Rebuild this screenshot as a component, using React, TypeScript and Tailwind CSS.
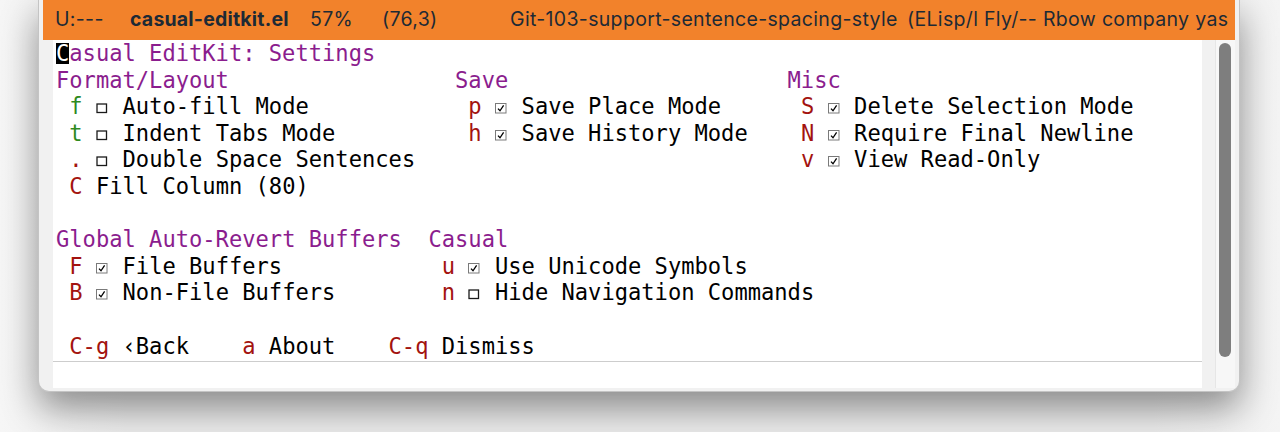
import React from "react";

const Key = ({ k, green }: { k: string; green?: boolean }) => (
    <span className={green ? "text-[#2f8a1f]" : "text-[#a3130f]"}>{k}</span>
);

const Box = ({ checked }: { checked?: boolean }) => (
    <span className="inline-block w-[1ch]">
        <svg width="12" height="11" viewBox="0 0 12 11" className="inline-block align-baseline">
            {checked ? (
                <>
                    <rect x="0.5" y="0.5" width="10.5" height="9.5" fill="white" stroke="#7a7a7a" />
                    <path d="M3 5.6 L5 7.8 L8.6 2.4" fill="none" stroke="#000" strokeWidth="1.3" />
                </>
            ) : (
                <rect x="1" y="1" width="9.5" height="8.5" fill="white" stroke="#1a1a1a" strokeWidth="1.3" />
            )}
        </svg>
    </span>
);

// one transient suffix: " k ☐ Label"
const Item = ({ k, label, checked, box = true, green }: { k: string; label: string; checked?: boolean; box?: boolean; green?: boolean }) => (
    <>
        {" "}<Key k={k} green={green} />{" "}
        {box && <><Box checked={checked} />{" "}</>}
        {label}
    </>
);

const Heading = ({ children }: { children: React.ReactNode }) => <span className="text-[#8b1d8e]">{children}</span>;

const Line = ({ children }: { children?: React.ReactNode }) => (
    <div className="h-[26.6px] leading-[26.6px] whitespace-pre">{children}</div>
);

const App = () => {
    return (
        <div className="w-[1280px] h-[432px] overflow-hidden bg-[linear-gradient(90deg,#f6f6f6,#ececec_10%,#ececec_90%,#f4f4f4)] pl-[38px] pr-[40px]">
            <div className="h-[392px] flex flex-col rounded-b-[11px] border border-t-0 border-[#c4c4c4] bg-[#f1f1f1] px-[4px] pb-[3px] shadow-[0_16px_36px_rgba(0,0,0,0.42)] overflow-hidden">

                {/* mode line */}
                <div className="h-[40px] shrink-0 bg-[#f2822b] flex items-center pl-[12px] text-[19.5px] text-[#1d2a35] font-['Inter',sans-serif] whitespace-pre tracking-[0.33px]">
                    <span className="w-[75px]">U:---</span>
                    <span className="w-[180px] font-bold tracking-[0.2px]">casual-editkit.el</span>
                    <span className="w-[72px]">57%</span>
                    <span className="w-[128px]">(76,3)</span>
                    <span className="w-[397px]">Git-103-support-sentence-spacing-style</span>
                    <span>(ELisp/l Fly/-- Rbow company yas</span>
                </div>

                <div className="flex flex-1 min-h-0">
                    {/* left fringe */}
                    <div className="w-[10px] shrink-0"></div>

                    {/* buffer + echo area */}
                    <div className="flex-1 flex flex-col bg-white">
                        <div className="h-[321px] pl-[3px] text-[22.1px] text-black font-['DejaVu_Sans_Mono',monospace]">
                            <Line>
                                {/* cursor on the first char */}
                                <span className="inline-block w-[1ch] text-white bg-[linear-gradient(transparent_3px,#000_3px,#000_24px,transparent_24px)]">C</span>
                                <Heading>asual EditKit: Settings</Heading>
                            </Line>
                            <Line>
                                <span className="inline-block w-[30ch]"><Heading>Format/Layout</Heading></span>
                                <span className="inline-block w-[25ch]"><Heading>Save</Heading></span>
                                <Heading>Misc</Heading>
                            </Line>
                            <Line>
                                <span className="inline-block w-[30ch]"><Item k="f" green label="Auto-fill Mode" /></span>
                                <span className="inline-block w-[25ch]"><Item k="p" checked label="Save Place Mode" /></span>
                                <Item k="S" checked label="Delete Selection Mode" />
                            </Line>
                            <Line>
                                <span className="inline-block w-[30ch]"><Item k="t" green label="Indent Tabs Mode" /></span>
                                <span className="inline-block w-[25ch]"><Item k="h" checked label="Save History Mode" /></span>
                                <Item k="N" checked label="Require Final Newline" />
                            </Line>
                            <Line>
                                <span className="inline-block w-[30ch]"><Item k="." label="Double Space Sentences" /></span>
                                <span className="inline-block w-[25ch]"></span>
                                <Item k="v" checked label="View Read-Only" />
                            </Line>
                            <Line><Item k="C" box={false} label="Fill Column (80)" /></Line>
                            <Line />
                            <Line>
                                <span className="inline-block w-[28ch]"><Heading>Global Auto-Revert Buffers</Heading></span>
                                <Heading>Casual</Heading>
                            </Line>
                            <Line>
                                <span className="inline-block w-[28ch]"><Item k="F" checked label="File Buffers" /></span>
                                <Item k="u" checked label="Use Unicode Symbols" />
                            </Line>
                            <Line>
                                <span className="inline-block w-[28ch]"><Item k="B" checked label="Non-File Buffers" /></span>
                                <Item k="n" label="Hide Navigation Commands" />
                            </Line>
                            <Line />
                            <Line>
                                {" "}<Key k="C-g" />{" ‹Back    "}<Key k="a" />{" About    "}<Key k="C-q" />{" Dismiss"}
                            </Line>
                        </div>
                        <div className="flex-1 border-t border-[#cdcdcd]"></div>
                    </div>

                    {/* right fringe + scroll bar */}
                    <div className="w-[13px] shrink-0"></div>
                    <div className="w-[20px] shrink-0 bg-[#f7f7f7] border-l border-[#e6e6e6] pt-[3px] pl-[3px]">
                        <div className="w-[12px] h-[314px] rounded-full bg-[#7e7e7e]"></div>
                    </div>
                </div>
            </div>
        </div>
    );
};

export default App;
